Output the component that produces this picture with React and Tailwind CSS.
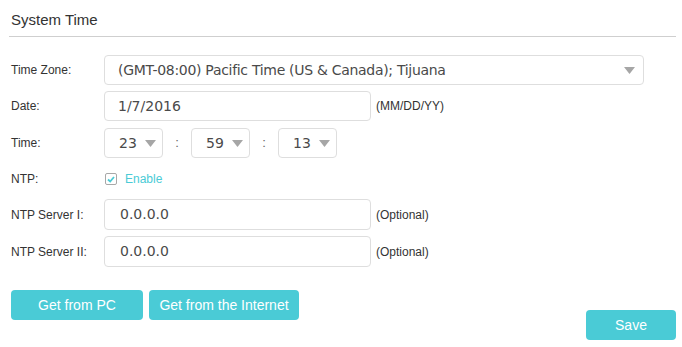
import React from 'react'

const Arrow = ({ className = '' }) => (
  <svg width="11" height="7" viewBox="0 0 11 7" className={className}>
    <path d="M0 0 L11 0 L5.5 7 Z" fill="#a6a6a6" />
  </svg>
)

const Label = ({ children }) => (
  <div className="w-[93px] shrink-0 text-[12px] text-[#333] font-['Liberation_Sans',Arial,sans-serif]">
    {children}
  </div>
)

const Box = ({ className = '', children }) => (
  <div
    className={`h-[30px] flex items-center border border-[#dedede] rounded-[4px] bg-white text-[14px] text-[#4a4a4a] font-['DejaVu_Sans',Verdana,sans-serif] ${className}`}
  >
    {children}
  </div>
)

const Hint = ({ children }) => (
  <span className="ml-[5px] text-[12px] text-[#333] font-['Liberation_Sans',Arial,sans-serif]">
    {children}
  </span>
)

const TimeSelect = ({ value }) => (
  <Box className="w-[59px] pl-[14px] pr-[6px] justify-between">
    <span>{value}</span>
    <Arrow />
  </Box>
)

const Colon = () => (
  <span className="w-[28px] text-center text-[13px] text-[#666] font-['Liberation_Sans',Arial,sans-serif]">:</span>
)

const Btn = ({ className = '', children }) => (
  <button
    className={`h-[30px] rounded-[4px] bg-[#4acbd6] text-white text-[14px] font-['Liberation_Sans',Arial,sans-serif] ${className}`}
  >
    {children}
  </button>
)

export default function App() {
  return (
    <div className="w-[682px] h-[347px] bg-white px-[9px] font-['Liberation_Sans',Arial,sans-serif]">
      {/* Header */}
      <div className="pt-[10px] pb-[6px] border-b border-[#cfcfcf] w-[667px]">
        <div className="pl-[2px] text-[15px] leading-[20px] text-[#333]">System Time</div>
      </div>

      <div className="pl-[2px]">
        {/* Time zone */}
        <div className="flex items-center mt-[18px]">
          <Label>Time Zone:</Label>
          <Box className="w-[540px] pl-[13px] pr-[8px] justify-between">
            <span className="tracking-[-0.3px]">(GMT-08:00) Pacific Time (US &amp; Canada); Tijuana</span>
            <Arrow />
          </Box>
        </div>

        {/* Date */}
        <div className="flex items-center mt-[6px]">
          <Label>Date:</Label>
          <Box className="w-[267px] pl-[13px]">1/7/2016</Box>
          <Hint>(MM/DD/YY)</Hint>
        </div>

        {/* Time */}
        <div className="flex items-center mt-[7px]">
          <Label>Time:</Label>
          <TimeSelect value="23" />
          <Colon />
          <TimeSelect value="59" />
          <Colon />
          <TimeSelect value="13" />
        </div>

        {/* NTP */}
        <div className="flex items-center mt-[13px] h-[16px]">
          <Label>NTP:</Label>
          <div className="ml-[1px] w-[12px] h-[12px] border border-[#a8a8a8] rounded-[2px] flex items-center justify-center">
            <svg width="8" height="7" viewBox="0 0 8 7">
              <path d="M1 3.5 L3.2 5.5 L7 1" fill="none" stroke="#4acbd6" strokeWidth="1.8" />
            </svg>
          </div>
          <span className="ml-[8px] text-[12px] text-[#4acbd6]">Enable</span>
        </div>

        {/* NTP Server I */}
        <div className="flex items-center mt-[12px]">
          <Label>NTP Server I:</Label>
          <Box className="w-[267px] h-[31px] pl-[15px]">0.0.0.0</Box>
          <Hint>(Optional)</Hint>
        </div>

        {/* NTP Server II */}
        <div className="flex items-center mt-[6px]">
          <Label>NTP Server II:</Label>
          <Box className="w-[267px] h-[31px] pl-[15px]">0.0.0.0</Box>
          <Hint>(Optional)</Hint>
        </div>

        {/* Buttons */}
        <div className="flex mt-[23px]">
          <Btn className="w-[132px]">Get from PC</Btn>
          <Btn className="w-[150px] ml-[6px]">Get from the Internet</Btn>
        </div>
        <div className="flex justify-end w-[665px] -mt-[10px]">
          <Btn className="w-[90px]">Save</Btn>
        </div>
      </div>
    </div>
  )
}
